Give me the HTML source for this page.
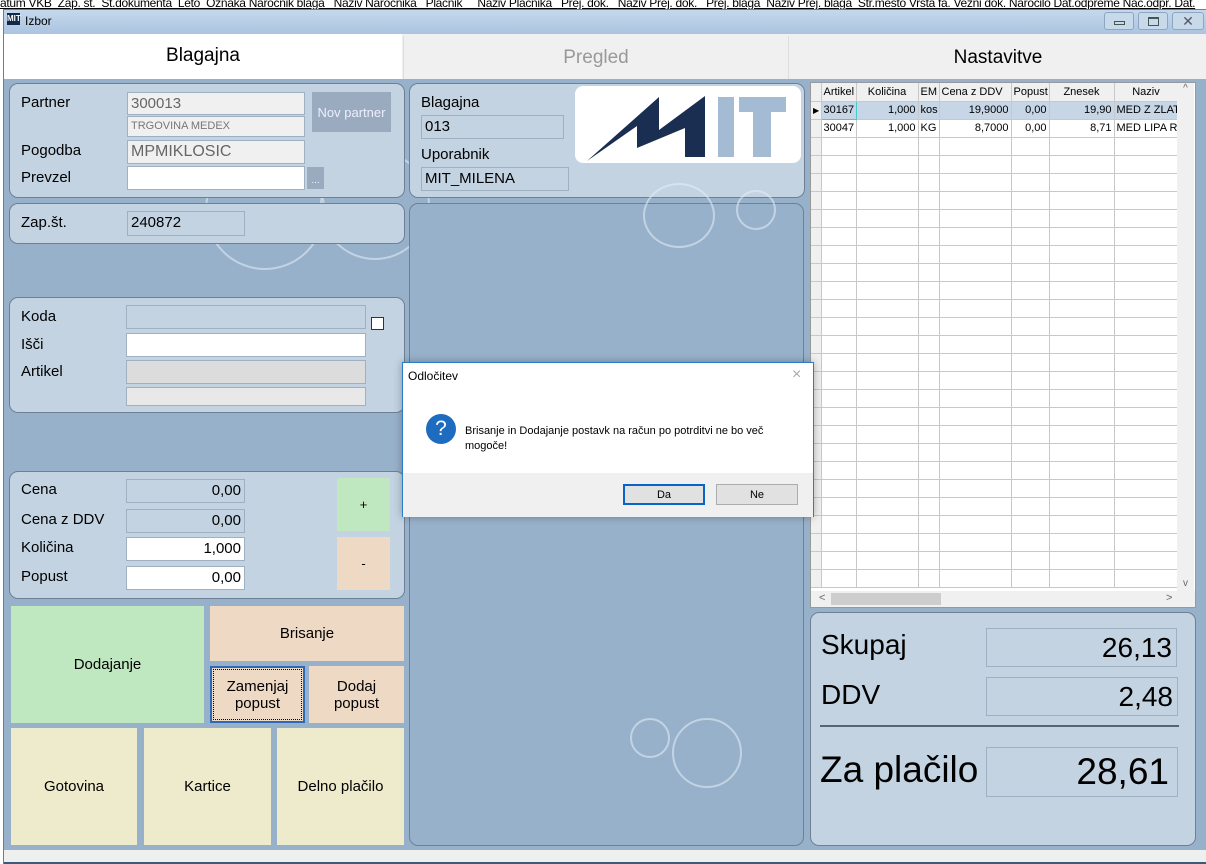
<!DOCTYPE html>
<html><head><meta charset="utf-8"><style>
*{box-sizing:border-box;margin:0;padding:0}
body{width:1206px;height:864px;overflow:hidden;background:#fff;font-family:"Liberation Sans",sans-serif;position:relative}
.a{position:absolute}
.p{position:absolute;background:#c3d3e1;border:1px solid #6f8094;border-radius:9px}
.l{position:absolute;font-size:15px;color:#000}
.f{position:absolute;background:#c3d3e1;border:1px solid #9fb0c2;font-size:15px;padding:2px 3px;color:#000}
.w{background:#fff}
.r{text-align:right}
.b{position:absolute;display:flex;align-items:center;justify-content:center;text-align:center;font-size:15px;color:#000}
.g{background:#c0e8c0}.k{background:#eed9c4}.y{background:#eeeacc}
.grid td{border-right:1px solid #c8c8c8;border-bottom:1px solid #c8c8c8;height:18px;font-size:11px;padding:0 2px;white-space:nowrap;overflow:hidden}
.c{position:absolute;border:2px solid rgba(230,240,250,.55);border-radius:50%}
</style></head><body>
<div class="a" style="left:0;top:-4px;width:1206px;font-size:12px;white-space:nowrap;text-decoration:underline;letter-spacing:-0.3px">atum VKB &nbsp;Zap. št. &nbsp;Št.dokumenta &nbsp;Leto &nbsp;Oznaka Naročnik blaga &nbsp;&nbsp;Naziv Naročnika &nbsp;&nbsp;Plačnik &nbsp;&nbsp;&nbsp;&nbsp;Naziv Plačnika &nbsp;&nbsp;Prej. dok. &nbsp;&nbsp;Naziv Prej. dok. &nbsp;&nbsp;Prej. blaga &nbsp;Naziv Prej. blaga &nbsp;Str.mesto Vrsta fa. Vezni dok. Naročilo Dat.odpreme Nač.odpr. Dat.</div>
<div class="a" style="left:3px;top:9px;width:1203px;height:855px;background:#b8cfe6;border:1px solid #6a7f96"></div>
<div class="a" style="left:4px;top:10px;width:1202px;height:24px;background:linear-gradient(#c5d8ec,#aac4e0)"></div>
<div class="a" style="left:7px;top:13px;width:13px;height:12px;background:#12284a;color:#fff;font-size:8px;font-weight:bold;line-height:12px;text-align:center">MIT</div>
<div class="a" style="left:25px;top:14px;font-size:12px">Izbor</div>
<div class="a" style="left:1104px;top:12px;width:30px;height:18px;border:1px solid #8ea6c0;border-radius:3px;background:#c8d9ea"><div class="a" style="left:9px;top:8px;width:11px;height:4px;border:1px solid #455"></div></div>
<div class="a" style="left:1138px;top:12px;width:30px;height:18px;border:1px solid #8ea6c0;border-radius:3px;background:#c8d9ea"><div class="a" style="left:9px;top:4px;width:11px;height:9px;border:1px solid #455;border-top-width:2px"></div></div>
<div class="a" style="left:1172px;top:12px;width:32px;height:18px;border:1px solid #8ea6c0;border-radius:3px;background:#c8d9ea;font-size:14px;text-align:center;line-height:16px;color:#556">✕</div>
<div class="a" style="left:4px;top:34px;width:1202px;height:45px;background:#f0f0f0"></div>
<div class="a" style="left:4px;top:34px;width:398px;height:45px;background:#fff;font-size:19px;text-align:center;line-height:44px">Blagajna</div>
<div class="a" style="left:403px;top:36px;width:386px;height:43px;border-left:1px solid #ddd;border-right:1px solid #ddd;font-size:19px;text-align:center;line-height:44px;color:#999">Pregled</div>
<div class="a" style="left:790px;top:36px;width:416px;height:43px;font-size:19px;text-align:center;line-height:44px">Nastavitve</div>
<div class="a" style="left:4px;top:79px;width:1202px;height:771px;background:#98b1ca"></div>
<div class="a" style="left:4px;top:850px;width:1202px;height:14px;background:#eef0f0;border-bottom:2px solid #3a5a7a"></div>
<div class="c" style="left:205px;top:150px;width:120px;height:120px"></div>
<div class="c" style="left:320px;top:150px;width:110px;height:110px"></div>
<div class="p" style="left:9px;top:83px;width:396px;height:115px"></div>
<div class="l" style="left:21px;top:94px">Partner</div>
<div class="f" style="left:127px;top:92px;width:178px;height:23px;background:#f0f0f0;color:#666">300013</div>
<div class="f" style="left:127px;top:116px;width:178px;height:21px;background:#f0f0f0;color:#777;font-size:11px;padding-top:3px">TRGOVINA MEDEX</div>
<div class="b" style="left:312px;top:92px;width:79px;height:40px;background:#9aabbf;color:#eef;font-size:13px">Nov partner</div>
<div class="l" style="left:21px;top:142px">Pogodba</div>
<div class="f" style="left:127px;top:140px;width:178px;height:24px;background:#f0f0f0;color:#666;font-size:16px">MPMIKLOSIC</div>
<div class="l" style="left:21px;top:169px">Prevzel</div>
<div class="f w" style="left:127px;top:166px;width:178px;height:24px"></div>
<div class="a" style="left:307px;top:167px;width:17px;height:22px;background:#9aabbf;color:#eef;font-size:10px;text-align:center;line-height:28px">...</div>
<div class="p" style="left:9px;top:203px;width:396px;height:41px"></div>
<div class="l" style="left:21px;top:214px">Zap.št.</div>
<div class="f" style="left:127px;top:211px;width:118px;height:25px">240872</div>
<div class="p" style="left:9px;top:297px;width:396px;height:116px"></div>
<div class="l" style="left:21px;top:308px">Koda</div>
<div class="f" style="left:126px;top:305px;width:240px;height:24px"></div>
<div class="a" style="left:371px;top:317px;width:13px;height:13px;background:#fff;border:1px solid #333"></div>
<div class="l" style="left:21px;top:336px">Išči</div>
<div class="f w" style="left:126px;top:333px;width:240px;height:24px"></div>
<div class="l" style="left:21px;top:363px">Artikel</div>
<div class="f" style="left:126px;top:360px;width:240px;height:24px;background:#dcdcdc"></div>
<div class="f" style="left:126px;top:387px;width:240px;height:19px;background:#e8e8e8"></div>
<div class="p" style="left:9px;top:471px;width:396px;height:128px"></div>
<div class="l" style="left:21px;top:481px">Cena</div>
<div class="f r" style="left:126px;top:479px;width:119px;height:24px">0,00</div>
<div class="l" style="left:21px;top:511px">Cena z DDV</div>
<div class="f r" style="left:126px;top:509px;width:119px;height:24px">0,00</div>
<div class="l" style="left:21px;top:539px">Količina</div>
<div class="f w r" style="left:126px;top:537px;width:119px;height:24px">1,000</div>
<div class="l" style="left:21px;top:568px">Popust</div>
<div class="f w r" style="left:126px;top:566px;width:119px;height:24px">0,00</div>
<div class="b g" style="left:337px;top:478px;width:53px;height:53px;font-size:13px">+</div>
<div class="b k" style="left:337px;top:537px;width:53px;height:53px;font-size:13px">-</div>
<div class="b g" style="left:11px;top:606px;width:193px;height:117px">Dodajanje</div>
<div class="b k" style="left:210px;top:606px;width:194px;height:55px">Brisanje</div>
<div class="b k" style="left:210px;top:666px;width:95px;height:57px;border:2px solid #2a6ab8;outline:1px dotted #000;outline-offset:-4px">Zamenjaj<br>popust</div>
<div class="b k" style="left:309px;top:666px;width:95px;height:57px">Dodaj<br>popust</div>
<div class="b y" style="left:11px;top:728px;width:126px;height:117px">Gotovina</div>
<div class="b y" style="left:144px;top:728px;width:127px;height:117px">Kartice</div>
<div class="b y" style="left:277px;top:728px;width:127px;height:117px">Delno plačilo</div>
<div class="p" style="left:409px;top:83px;width:396px;height:115px"></div>
<div class="l" style="left:421px;top:94px">Blagajna</div>
<div class="f" style="left:421px;top:115px;width:143px;height:24px">013</div>
<div class="l" style="left:421px;top:146px">Uporabnik</div>
<div class="f" style="left:421px;top:167px;width:148px;height:24px">MIT_MILENA</div>
<div class="a" style="left:575px;top:86px;width:226px;height:77px;background:#fff;border-radius:8px">
<svg width="226" height="77" viewBox="0 0 226 77"><polygon points="12,75 84,11 84,44 130,10 130,71 110,71 110,42 62,62 62,40" fill="#1a2e52"/><rect x="143" y="11" width="16" height="60" fill="#a4bbd4"/><rect x="164" y="11" width="47" height="15" fill="#a4bbd4"/><rect x="178" y="11" width="18" height="60" fill="#a4bbd4"/></svg></div>
<div class="p" style="left:409px;top:203px;width:395px;height:643px;background:#98b1ca"></div>
<div class="c" style="left:643px;top:183px;width:72px;height:65px"></div>
<div class="c" style="left:736px;top:190px;width:40px;height:40px"></div>
<div class="c" style="left:630px;top:718px;width:40px;height:40px"></div>
<div class="c" style="left:672px;top:718px;width:70px;height:70px"></div>
<div class="a" style="left:810px;top:82px;width:386px;height:526px;background:#fff;border:1px solid #999;overflow:hidden">
<table class="grid" style="border-collapse:collapse;table-layout:fixed;width:367px"><colgroup><col style="width:10px"><col style="width:35px"><col style="width:62px"><col style="width:21px"><col style="width:72px"><col style="width:38px"><col style="width:65px"><col style="width:64px"></colgroup>
<tr style="background:#f0f0f0"><td></td><td>Artikel</td><td style="text-align:center">Količina</td><td>EM</td><td>Cena z DDV</td><td>Popust</td><td style="text-align:center">Znesek</td><td style="text-align:center">Naziv</td></tr>
<tr style="background:#c6d6e6"><td style="background:#f0f0f0;font-size:8px">▶</td><td style="border:1px solid #4cc">30167</td><td class="r">1,000</td><td>kos</td><td class="r">19,9000</td><td class="r">0,00</td><td class="r">19,90</td><td>MED Z ZLAT</td></tr>
<tr><td style="background:#f0f0f0"></td><td>30047</td><td class="r">1,000</td><td>KG</td><td class="r">8,7000</td><td class="r">0,00</td><td class="r">8,71</td><td>MED LIPA R</td></tr>
<tr><td style="background:#f0f0f0"></td><td></td><td></td><td></td><td></td><td></td><td></td><td></td></tr><tr><td style="background:#f0f0f0"></td><td></td><td></td><td></td><td></td><td></td><td></td><td></td></tr><tr><td style="background:#f0f0f0"></td><td></td><td></td><td></td><td></td><td></td><td></td><td></td></tr><tr><td style="background:#f0f0f0"></td><td></td><td></td><td></td><td></td><td></td><td></td><td></td></tr><tr><td style="background:#f0f0f0"></td><td></td><td></td><td></td><td></td><td></td><td></td><td></td></tr><tr><td style="background:#f0f0f0"></td><td></td><td></td><td></td><td></td><td></td><td></td><td></td></tr><tr><td style="background:#f0f0f0"></td><td></td><td></td><td></td><td></td><td></td><td></td><td></td></tr><tr><td style="background:#f0f0f0"></td><td></td><td></td><td></td><td></td><td></td><td></td><td></td></tr><tr><td style="background:#f0f0f0"></td><td></td><td></td><td></td><td></td><td></td><td></td><td></td></tr><tr><td style="background:#f0f0f0"></td><td></td><td></td><td></td><td></td><td></td><td></td><td></td></tr><tr><td style="background:#f0f0f0"></td><td></td><td></td><td></td><td></td><td></td><td></td><td></td></tr><tr><td style="background:#f0f0f0"></td><td></td><td></td><td></td><td></td><td></td><td></td><td></td></tr><tr><td style="background:#f0f0f0"></td><td></td><td></td><td></td><td></td><td></td><td></td><td></td></tr><tr><td style="background:#f0f0f0"></td><td></td><td></td><td></td><td></td><td></td><td></td><td></td></tr><tr><td style="background:#f0f0f0"></td><td></td><td></td><td></td><td></td><td></td><td></td><td></td></tr><tr><td style="background:#f0f0f0"></td><td></td><td></td><td></td><td></td><td></td><td></td><td></td></tr><tr><td style="background:#f0f0f0"></td><td></td><td></td><td></td><td></td><td></td><td></td><td></td></tr><tr><td style="background:#f0f0f0"></td><td></td><td></td><td></td><td></td><td></td><td></td><td></td></tr><tr><td style="background:#f0f0f0"></td><td></td><td></td><td></td><td></td><td></td><td></td><td></td></tr><tr><td style="background:#f0f0f0"></td><td></td><td></td><td></td><td></td><td></td><td></td><td></td></tr><tr><td style="background:#f0f0f0"></td><td></td><td></td><td></td><td></td><td></td><td></td><td></td></tr><tr><td style="background:#f0f0f0"></td><td></td><td></td><td></td><td></td><td></td><td></td><td></td></tr><tr><td style="background:#f0f0f0"></td><td></td><td></td><td></td><td></td><td></td><td></td><td></td></tr><tr><td style="background:#f0f0f0"></td><td></td><td></td><td></td><td></td><td></td><td></td><td></td></tr><tr><td style="background:#f0f0f0"></td><td></td><td></td><td></td><td></td><td></td><td></td><td></td></tr>
</table>
<div class="a" style="left:366px;top:0;width:17px;height:508px;background:#f0f0f0;font-size:10px;color:#666;text-align:center">^<div class="a" style="left:0;bottom:2px;width:17px">v</div></div>
<div class="a" style="left:0;top:508px;width:384px;height:16px;background:#f0f0f0"><div class="a" style="left:20px;top:2px;width:110px;height:12px;background:#cdcdcd"></div><span class="a" style="left:8px;top:1px;font-size:11px;color:#666">&lt;</span><span class="a" style="left:355px;top:1px;font-size:11px;color:#666">&gt;</span></div>
</div>
<div class="p" style="left:810px;top:612px;width:386px;height:234px"></div>
<div class="a" style="left:821px;top:629px;font-size:28px">Skupaj</div>
<div class="f r" style="left:986px;top:628px;width:191px;height:39px;font-size:28px;padding:3px 4px">26,13</div>
<div class="a" style="left:821px;top:679px;font-size:28px">DDV</div>
<div class="f r" style="left:986px;top:677px;width:192px;height:39px;font-size:28px;padding:3px 4px">2,48</div>
<div class="a" style="left:820px;top:725px;width:359px;height:2px;background:#5a6470"></div>
<div class="a" style="left:820px;top:749px;font-size:37px">Za plačilo</div>
<div class="f r" style="left:986px;top:747px;width:192px;height:50px;font-size:37px;padding:3px 8px">28,61</div>
<div class="a" style="left:402px;top:362px;width:412px;height:155px;background:#fff;border:1px solid #2a7cc8;box-shadow:0 0 8px rgba(0,0,0,.3)">
<div class="a" style="left:5px;top:6px;font-size:12px">Odločitev</div>
<div class="a" style="left:389px;top:3px;font-size:16px;color:#aaa">×</div>
<div class="a" style="left:23px;top:51px;width:30px;height:30px;border-radius:50%;background:#1d6cbf;color:#fff;font-size:21px;text-align:center;line-height:30px">?</div>
<div class="a" style="left:62px;top:61px;font-size:11px;line-height:15px;width:320px">Brisanje in Dodajanje postavk na račun po potrditvi ne bo več mogoče!</div>
<div class="a" style="left:0;top:110px;width:410px;height:44px;background:#f0f0f0"></div>
<div class="b" style="left:220px;top:121px;width:82px;height:21px;background:#e1e1e1;border:2px solid #0a64c8;font-size:11px">Da</div>
<div class="b" style="left:313px;top:121px;width:82px;height:21px;background:#e1e1e1;border:1px solid #adadad;font-size:11px">Ne</div>
</div>
</body></html>
